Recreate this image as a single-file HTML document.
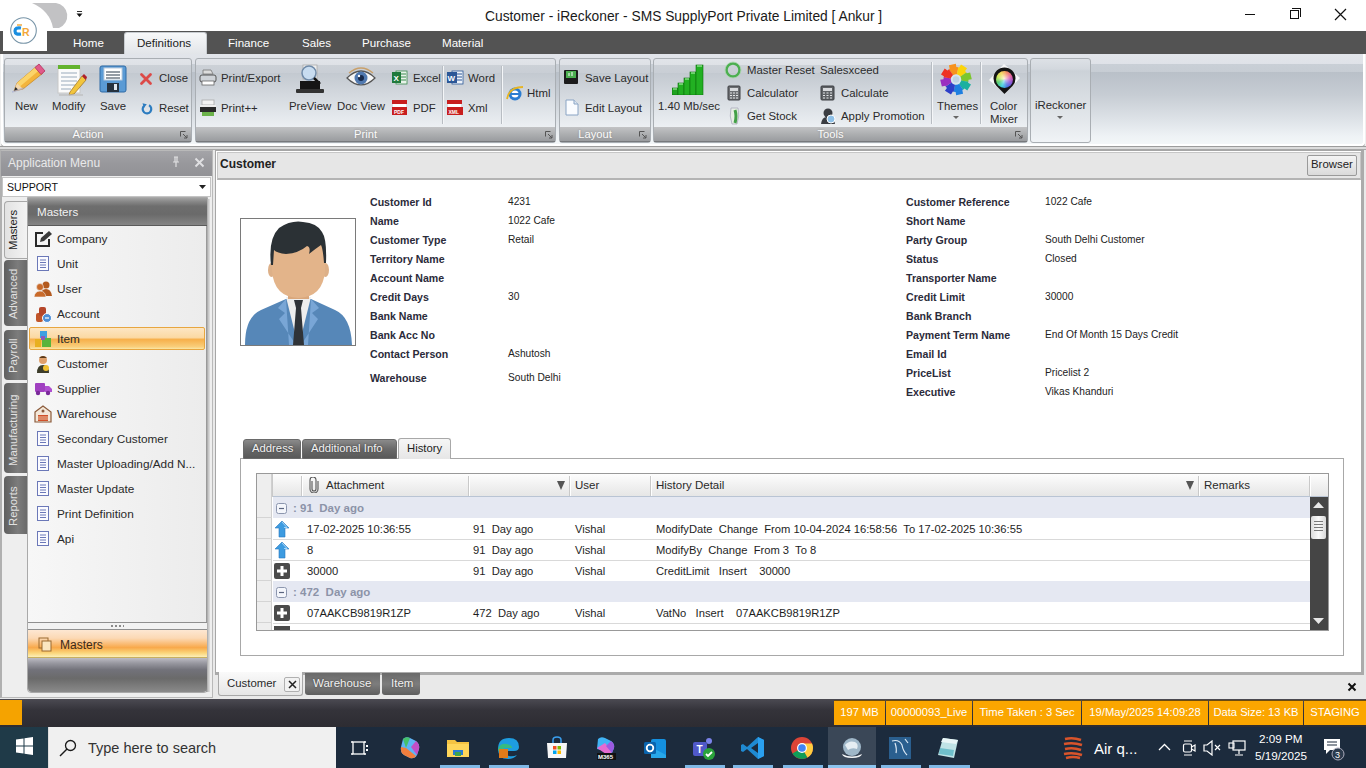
<!DOCTYPE html>
<html><head><meta charset="utf-8">
<style>
*{box-sizing:border-box;margin:0;padding:0}
html,body{width:1366px;height:768px;overflow:hidden;background:#efefef;font-family:"Liberation Sans",sans-serif;color:#222;position:relative}
.a{position:absolute}
.t{position:absolute;white-space:nowrap;line-height:1}
/* title */
#title{left:0;top:0;width:1366px;height:31px;background:#fff}
#tabs{left:0;top:31px;width:1366px;height:23px;background:#535353}
.tab{position:absolute;top:36px;color:#fff;font-size:11.6px;line-height:14px}
#ribbon{left:1px;top:54px;width:1364px;height:92px;border-radius:0 0 4px 4px;border:2px solid #fff;border-top:none;box-shadow:0 1px 0 0 #8c8c8c;background:linear-gradient(#e2e5ea 0,#dfe2e8 10px,#c9cfd6 10px,#c7cdd4 18px,#b9c0c8 18px,#c6ccd3 40px,#dde2e7 65px,#eef2f5 82px,#f3f6f8 90px)}
.grp{position:absolute;top:58px;height:85px;border:1px solid #a9aeb3;border-radius:3px;
 background:linear-gradient(#e1e4e9 0,#dee1e6 6px,#ccd1d7 6px,#c9ced5 14px,#c3c9d0 14px,#d3d8de 35px,#e6eaee 60px,#eef1f4 70px)}
.glab{position:absolute;left:0;right:0;bottom:0;height:15px;background:linear-gradient(#c2c3c5,#a9abad 60%,#9a9c9f);border-bottom:1px solid #77797c;color:#fbfbfb;font-size:11.2px;line-height:14px;text-align:center;padding-right:20px;text-shadow:0 0 2px #888}
.rl{position:absolute;font-size:11.4px;line-height:14px;color:#2b2b2b;white-space:nowrap}
</style></head><body>
<div class="a" id="title"></div>
<div class="t" style="left:485px;top:10px;font-size:13.8px;color:#1a1a1a">Customer - iReckoner - SMS SupplyPort Private Limited [ Ankur ]</div>
<!-- window controls -->
<div class="a" style="left:1245px;top:14px;width:10px;height:1px;background:#111"></div>
<div class="a" style="left:1290px;top:10px;width:9px;height:9px;border:1px solid #111;background:#fff"></div>
<div class="a" style="left:1292px;top:8px;width:9px;height:9px;border-top:1px solid #111;border-right:1px solid #111"></div>
<svg class="a" style="left:1334px;top:8px" width="13" height="13"><path d="M1 1L12 12M12 1L1 12" stroke="#111" stroke-width="1.2"/></svg>

<div class="a" id="tabs"></div>
<!-- logo -->
<div class="a" style="left:3px;top:31px;width:44px;height:20px;background:#fff"></div>
<svg class="a" style="left:28px;top:1px" width="44" height="30" viewBox="0 0 44 30"><path d="M4 2 L28 2 A13 13 0 0 1 31 27 L25 27 Q22 10 4 2Z" fill="#c2c2c4"/></svg>
<svg class="a" style="left:75px;top:9px" width="9" height="10" viewBox="0 0 9 10"><path d="M2 2.5h5" stroke="#333" stroke-width="1"/><path d="M1.5 4.5h6L4.5 8Z" fill="#111"/></svg>
<svg class="a" style="left:8px;top:16px" width="32" height="30" viewBox="0 0 32 30"><circle cx="15.5" cy="14.5" r="12.8" fill="#fff" stroke="#7895a8" stroke-width="1.1"/>
<path d="M9 9h5" stroke="#f0b050" stroke-width="1.6"/><path d="M13 12 Q7 11 7 15 Q7 19 13 18" stroke="#1a8ee0" stroke-width="3.2" fill="none"/>
<text x="14" y="19.5" font-size="10.5" font-weight="bold" fill="#f3a83a" font-family="Liberation Sans">R</text></svg>
<div class="tab" style="left:73px">Home</div>
<div class="a" style="left:124px;top:32px;width:83px;height:23px;border-radius:3px 3px 0 0;background:linear-gradient(#f7f8f9,#e1e4e8);border:1px solid #c8ccd0;border-bottom:none"></div>
<div class="tab" style="left:137px;color:#222">Definitions</div>
<div class="tab" style="left:228px">Finance</div>
<div class="tab" style="left:302px">Sales</div>
<div class="tab" style="left:362px">Purchase</div>
<div class="tab" style="left:442px">Material</div>

<div class="a" id="ribbon"></div>
<!-- groups -->
<div class="grp" style="left:4px;width:188px"><div class="glab">Action</div></div>
<div class="grp" style="left:195px;width:361px"><div class="glab">Print</div></div>
<div class="grp" style="left:559px;width:92px"><div class="glab">Layout</div></div>
<div class="grp" style="left:653px;width:375px"><div class="glab">Tools</div></div>
<div class="grp" style="left:1030px;width:61px;background:linear-gradient(#dde1e6,#d3d8de 10px,#ccd2d8 12px,#e3e7eb 60px,#f0f3f6)"></div>


<!-- ACTION -->
<svg class="a" style="left:12px;top:62px" width="34" height="32" viewBox="0 0 34 32">
 <path d="M2 29 L5 21 L25 4 L31 11 L11 27 Z" fill="#f3b43c" stroke="#c98a2a" stroke-width=".8"/>
 <path d="M5 21 L25 4 L28 7.5 L8 24.5Z" fill="#fbd46a"/>
 <path d="M2 29 L5 21 L11 27Z" fill="#f2d8b0"/><path d="M2 29 L3.5 25 L6 27.5Z" fill="#2a2a2a"/>
 <path d="M23 5.5 L27 2 L33 9 L29 12.5Z" fill="#e05a8a" stroke="#b03060" stroke-width=".8"/>
 <path d="M0 30 L12 26" stroke="#9aa0d0" stroke-width="1.5" opacity=".5"/>
</svg>
<div class="rl" style="left:15px;top:99px">New</div>
<svg class="a" style="left:55px;top:62px" width="32" height="34" viewBox="0 0 32 34">
 <rect x="3" y="5" width="22" height="26" fill="#fbfbfb" stroke="#c8c8c8"/>
 <rect x="3" y="3" width="22" height="4" fill="#63b32e"/>
 <path d="M6 11h16M6 15h16M6 19h16M6 23h14M6 27h10" stroke="#9ab" stroke-width="1"/>
 <path d="M15 30 L27 14 L31 18 L19 32 L14 33Z" fill="#f2c53d" stroke="#a5782a" stroke-width=".8"/>
 <path d="M27 14 L29 12 L32 15 L31 18Z" fill="#b0202a"/>
 <rect x="4" y="32" width="24" height="2" fill="#bbb" opacity=".6"/>
</svg>
<div class="rl" style="left:52px;top:99px">Modify</div>
<svg class="a" style="left:99px;top:65px" width="28" height="28" viewBox="0 0 28 28">
 <rect x="1" y="1" width="26" height="26" rx="2" fill="#5b9bd5" stroke="#2f6aa6"/>
 <rect x="5" y="3" width="18" height="12" fill="#fff" stroke="#bcd"/>
 <path d="M7 7h14M7 10h14M7 13h14" stroke="#2b3a4a" stroke-width="1.2"/>
 <rect x="8" y="18" width="12" height="9" fill="#26323f"/><rect x="15" y="19" width="3" height="6" fill="#dfe8f0"/>
</svg>
<div class="rl" style="left:100px;top:99px">Save</div>
<svg class="a" style="left:139px;top:72px" width="14" height="14" viewBox="0 0 14 14"><path d="M2.5 2.5L11.5 11.5M11.5 2.5L2.5 11.5" stroke="#dc4a48" stroke-width="2.8" stroke-linecap="round"/></svg>
<div class="rl" style="left:159px;top:71px">Close</div>
<svg class="a" style="left:140px;top:102px" width="13" height="13" viewBox="0 0 13 13"><path d="M4.2 3.8 A4.3 4.3 0 1 0 9 3.3" fill="none" stroke="#2c7cc0" stroke-width="2.2"/><path d="M2.5 1.2 L6.8 2.2 L4 5.8Z" fill="#2c7cc0"/></svg>
<div class="rl" style="left:159px;top:101px">Reset</div>
<svg class="a" style="left:180px;top:131px" width="8" height="8"><path d="M0.5 0.5h5M0.5 0.5v5M3 3l4 4M7 4v3h-3" stroke="#555" stroke-width="1" fill="none"/></svg>

<!-- PRINT -->
<svg class="a" style="left:199px;top:69px" width="18" height="17" viewBox="0 0 18 17">
 <path d="M4 1h8l2 4H4Z" fill="#ddd" stroke="#777" stroke-width=".8"/>
 <rect x="1" y="6" width="16" height="7" rx="2" fill="#cfd3d8" stroke="#555"/>
 <rect x="3" y="12" width="12" height="4" fill="#fff" stroke="#666" stroke-width=".8"/>
</svg>
<div class="rl" style="left:221px;top:71px">Print/Export</div>
<svg class="a" style="left:199px;top:99px" width="18" height="18" viewBox="0 0 18 18">
 <rect x="3" y="1" width="12" height="5" fill="#f4f4f4" stroke="#aaa" stroke-width=".8"/>
 <rect x="1" y="6" width="16" height="7" fill="#2a2a2a"/><rect x="1" y="6" width="16" height="2" fill="#eee"/>
 <rect x="3" y="13" width="12" height="4" fill="#6bb24a"/>
</svg>
<div class="rl" style="left:221px;top:101px">Print++</div>
<svg class="a" style="left:294px;top:64px" width="32" height="30" viewBox="0 0 32 30">
 <rect x="9" y="1" width="14" height="14" fill="#eee" stroke="#aaa" stroke-width=".8"/>
 <circle cx="15" cy="9" r="7" fill="#c8dcf0" stroke="#6f8aa8" stroke-width="1.5"/>
 <path d="M20 14 L26 20" stroke="#111" stroke-width="2.5"/>
 <rect x="6" y="17" width="20" height="8" fill="#151515"/>
 <rect x="2" y="25" width="28" height="4" rx="1" fill="#333"/>
</svg>
<div class="rl" style="left:289px;top:99px">PreView</div>
<svg class="a" style="left:345px;top:67px" width="32" height="22" viewBox="0 0 32 22">
 <path d="M2 11 Q16 -3 30 11 Q16 25 2 11Z" fill="#f6f6f6" stroke="#555" stroke-width="1.2"/>
 <circle cx="16" cy="11" r="6.5" fill="#5079b0"/><circle cx="16" cy="11" r="3" fill="#17294a"/><circle cx="14" cy="9" r="1.2" fill="#fff"/>
 <path d="M4 6 Q16 -4 28 6" stroke="#c9a06a" stroke-width="1.5" fill="none"/>
</svg>
<div class="rl" style="left:337px;top:99px">Doc View</div>
<svg class="a" style="left:391px;top:69px" width="17" height="17" viewBox="0 0 17 17">
 <rect x="5" y="2" width="11" height="13" fill="#e8f3ea" stroke="#3b8a4f" stroke-width=".8"/>
 <path d="M9 5h6M9 8h6M9 11h6" stroke="#3b8a4f" stroke-width="1"/>
 <rect x="1" y="3" width="9" height="11" fill="#1f7a3c"/><text x="2.5" y="12" font-size="8" fill="#fff" font-family="Liberation Sans" font-weight="bold">X</text>
</svg>
<div class="rl" style="left:413px;top:71px">Excel</div>
<svg class="a" style="left:391px;top:99px" width="17" height="17" viewBox="0 0 17 17">
 <rect x="1" y="1" width="15" height="4" fill="#c81e1e"/><rect x="2" y="5" width="13" height="3" fill="#fff"/>
 <rect x="1" y="8" width="15" height="8" fill="#c81e1e"/><text x="3" y="14.5" font-size="5" fill="#fff" font-family="Liberation Sans" font-weight="bold">PDF</text>
</svg>
<div class="rl" style="left:413px;top:101px">PDF</div>
<div class="a" style="left:442px;top:66px;width:1px;height:58px;background:#b8bdc3;box-shadow:1px 0 0 #f4f6f8"></div>
<svg class="a" style="left:446px;top:69px" width="18" height="17" viewBox="0 0 18 17">
 <rect x="6" y="2" width="11" height="13" fill="#eef3fa" stroke="#2b5797" stroke-width=".8"/>
 <path d="M10 5h6M10 8h6M10 11h6" stroke="#2b5797" stroke-width="1"/>
 <rect x="1" y="3" width="10" height="11" fill="#2b5797"/><text x="1.5" y="12" font-size="8" fill="#fff" font-family="Liberation Sans" font-weight="bold">W</text>
</svg>
<div class="rl" style="left:468px;top:71px">Word</div>
<svg class="a" style="left:446px;top:99px" width="18" height="17" viewBox="0 0 18 17">
 <rect x="1" y="1" width="15" height="4" fill="#c81e1e"/><rect x="2" y="5" width="13" height="3" fill="#fff"/>
 <rect x="1" y="8" width="16" height="8" fill="#c81e1e"/><text x="2.5" y="14.5" font-size="5" fill="#fff" font-family="Liberation Sans" font-weight="bold">XML</text>
</svg>
<div class="rl" style="left:468px;top:101px">Xml</div>
<div class="a" style="left:501px;top:66px;width:1px;height:58px;background:#b8bdc3;box-shadow:1px 0 0 #f4f6f8"></div>
<svg class="a" style="left:506px;top:84px" width="18" height="18" viewBox="0 0 18 18">
 <circle cx="9" cy="10" r="6.5" fill="#2a7dd1"/><circle cx="9" cy="10" r="3.5" fill="#fff"/><rect x="5" y="9" width="9" height="2" fill="#2a7dd1"/>
 <path d="M1 15 Q3 3 17 3" stroke="#e6b422" stroke-width="1.8" fill="none"/>
</svg>
<div class="rl" style="left:527px;top:86px">Html</div>
<svg class="a" style="left:545px;top:131px" width="8" height="8"><path d="M0.5 0.5h5M0.5 0.5v5M3 3l4 4M7 4v3h-3" stroke="#555" stroke-width="1" fill="none"/></svg>

<!-- LAYOUT -->
<svg class="a" style="left:563px;top:69px" width="16" height="16" viewBox="0 0 16 16">
 <rect x="1" y="1" width="14" height="14" rx="1" fill="#1c1c1c"/><rect x="3" y="2" width="10" height="7" fill="#4caf50"/><path d="M6 4v3M9 3v4" stroke="#fff" stroke-width="1"/>
</svg>
<div class="rl" style="left:585px;top:71px">Save Layout</div>
<svg class="a" style="left:565px;top:99px" width="14" height="17" viewBox="0 0 14 17">
 <path d="M1 1h8l4 4v11H1Z" fill="#fafcff" stroke="#8aa4c4" stroke-width="1"/><path d="M9 1v4h4" fill="#dde7f2" stroke="#8aa4c4" stroke-width="1"/>
</svg>
<div class="rl" style="left:585px;top:101px">Edit Layout</div>
<svg class="a" style="left:639px;top:131px" width="8" height="8"><path d="M0.5 0.5h5M0.5 0.5v5M3 3l4 4M7 4v3h-3" stroke="#555" stroke-width="1" fill="none"/></svg>

<!-- TOOLS -->
<svg class="a" style="left:672px;top:64px" width="32" height="31" viewBox="0 0 32 31">
 <rect x="0" y="24" width="6" height="7" fill="#1fa31f" stroke="#0b6e0b" stroke-width=".6"/>
 <rect x="6" y="19" width="6" height="12" fill="#22b022" stroke="#0b6e0b" stroke-width=".6"/>
 <rect x="12" y="14" width="6" height="17" fill="#22b022" stroke="#0b6e0b" stroke-width=".6"/>
 <rect x="18" y="8" width="6" height="23" fill="#22b022" stroke="#0b6e0b" stroke-width=".6"/>
 <rect x="24" y="1" width="7" height="30" fill="#22b022" stroke="#0b6e0b" stroke-width=".6"/>
 <path d="M1 25h4M7 20h4M13 15h4M19 9h4M25 2h5" stroke="#b9f5b9" stroke-width="1"/>
</svg>
<div class="rl" style="left:658px;top:99px">1.40 Mb/sec</div>
<svg class="a" style="left:724px;top:61px" width="18" height="18" viewBox="0 0 18 18"><circle cx="9" cy="9" r="6.5" fill="none" stroke="#4caf50" stroke-width="2.5"/><circle cx="9" cy="9" r="8" fill="none" stroke="#a5d6a7" stroke-width="1" opacity=".7"/></svg>
<div class="rl" style="left:747px;top:63px">Master Reset</div>
<div class="rl" style="left:820px;top:63px">Salesxceed</div>
<svg class="a" style="left:727px;top:85px" width="14" height="16" viewBox="0 0 14 16"><rect x="1" y="1" width="12" height="14" rx="1" fill="#6d6f73" stroke="#3d3f43"/><rect x="3" y="3" width="8" height="3" fill="#d8dadd"/><path d="M3 8h2M6 8h2M9 8h2M3 10.5h2M6 10.5h2M9 10.5h2M3 13h2M6 13h2M9 13h2" stroke="#e4e6e8" stroke-width="1.2"/></svg>
<div class="rl" style="left:747px;top:86px">Calculator</div>
<svg class="a" style="left:728px;top:107px" width="13" height="18" viewBox="0 0 13 18"><path d="M3 1 Q1 9 4 17 L9 17 Q12 9 10 1Z" fill="#e8efe5" stroke="#aab" stroke-width=".8"/><path d="M7 3 Q9 9 7 16" stroke="#43a047" stroke-width="3" fill="none"/></svg>
<div class="rl" style="left:747px;top:109px">Get Stock</div>
<svg class="a" style="left:820px;top:85px" width="15" height="16" viewBox="0 0 15 16"><rect x="1" y="1" width="13" height="14" rx="1" fill="#5f6266" stroke="#3d3f43"/><rect x="3" y="3" width="9" height="3" fill="#d8dadd"/><path d="M3 8h2M6.5 8h2M10 8h2M3 10.5h2M6.5 10.5h2M10 10.5h2M3 13h2M6.5 13h2M10 13h2" stroke="#e4e6e8" stroke-width="1.2"/></svg>
<div class="rl" style="left:841px;top:86px">Calculate</div>
<svg class="a" style="left:820px;top:107px" width="17" height="18" viewBox="0 0 17 18"><circle cx="8" cy="6" r="4.5" fill="#3a3d42"/><path d="M1 17 Q2 9 8 10 Q14 9 15 17Z" fill="#3a3d42"/><circle cx="11" cy="12" r="4" fill="#8fc1e8" stroke="#fff" stroke-width="1"/></svg>
<div class="rl" style="left:841px;top:109px">Apply Promotion</div>
<div class="a" style="left:931px;top:62px;width:1px;height:62px;background:#b8bdc3;box-shadow:1px 0 0 #f4f6f8"></div>
<svg class="a" style="left:939px;top:63px" width="34" height="33" viewBox="0 0 34 33"><path d="M14.17 12.38 L9.92 6.20 L10.66 5.73 L9.95 2.36 L16.86 0.70 L17.33 4.00 L19.39 4.23 L17.95 11.59 Z" fill="#f7921e"/><path d="M17.91 11.58 L19.28 4.21 L20.13 4.40 L22.01 1.52 L28.07 5.23 L26.07 7.90 L27.36 9.51 L21.15 13.70 Z" fill="#fbd40a"/><path d="M21.12 13.67 L27.30 9.42 L27.77 10.16 L31.14 9.45 L32.80 16.36 L29.50 16.83 L29.27 18.89 L21.91 17.45 Z" fill="#7cc62e"/><path d="M21.92 17.41 L29.29 18.78 L29.10 19.63 L31.98 21.51 L28.27 27.57 L25.60 25.57 L23.99 26.86 L19.80 20.65 Z" fill="#1bb0a0"/><path d="M19.83 20.62 L24.08 26.80 L23.34 27.27 L24.05 30.64 L17.14 32.30 L16.67 29.00 L14.61 28.77 L16.05 21.41 Z" fill="#1e7fe0"/><path d="M16.09 21.42 L14.72 28.79 L13.87 28.60 L11.99 31.48 L5.93 27.77 L7.93 25.10 L6.64 23.49 L12.85 19.30 Z" fill="#2d3fc8"/><path d="M12.88 19.33 L6.70 23.58 L6.23 22.84 L2.86 23.55 L1.20 16.64 L4.50 16.17 L4.73 14.11 L12.09 15.55 Z" fill="#9a2ec0"/><path d="M12.08 15.59 L4.71 14.22 L4.90 13.37 L2.02 11.49 L5.73 5.43 L8.40 7.43 L10.01 6.14 L14.20 12.35 Z" fill="#ee3224"/><circle cx="17" cy="16.5" r="5.2" fill="#d6e4ee"/><circle cx="17" cy="16.5" r="3.2" fill="#bfd3e3"/></svg>
<div class="rl" style="left:937px;top:99px">Themes</div>
<svg class="a" style="left:953px;top:116px" width="6" height="4"><path d="M0 0h6L3 3Z" fill="#666"/></svg>
<div class="a" style="left:980px;top:62px;width:1px;height:62px;background:#b8bdc3;box-shadow:1px 0 0 #f4f6f8"></div>
<svg class="a" style="left:988px;top:63px" width="34" height="33" viewBox="0 0 34 33">
 <path d="M16 1 L32 15 L17 31 L1 17Z" fill="#fff" opacity=".85"/>
 <path d="M16.5 31 L8.5 23 A11 11 0 1 1 24.5 23Z" fill="#141414"/>
</svg>
<div class="a" style="left:996px;top:71px;width:17px;height:17px;border-radius:50%;background:conic-gradient(from 200deg,#3fd0e0,#46c86a,#c8e84a,#f4d24a,#f07a50,#e0509a,#8a4ad0,#4a6ae0,#3fd0e0)"></div>
<div class="a" style="left:996px;top:71px;width:17px;height:17px;border-radius:50%;background:radial-gradient(circle at 50% 45%,rgba(255,255,255,.8),rgba(255,255,255,.2) 45%,rgba(255,255,255,0) 70%)"></div>
<div class="rl" style="left:990px;top:99px">Color</div>
<div class="rl" style="left:990px;top:112px">Mixer</div>
<svg class="a" style="left:1015px;top:131px" width="8" height="8"><path d="M0.5 0.5h5M0.5 0.5v5M3 3l4 4M7 4v3h-3" stroke="#555" stroke-width="1" fill="none"/></svg>
<div class="rl" style="left:1035px;top:98px">iReckoner</div>
<svg class="a" style="left:1057px;top:116px" width="6" height="4"><path d="M0 0h6L3 3Z" fill="#666"/></svg>



<!-- ===== LEFT PANEL ===== -->
<div class="a" style="left:0;top:146px;width:1366px;height:553px;background:#e9e9e9"></div>
<div class="a" style="left:0;top:146px;width:1366px;height:1px;background:#9c9c9c"></div><div class="a" style="left:0;top:147px;width:1366px;height:2px;background:#dcdcdc"></div><div class="a" style="left:0;top:149px;width:1366px;height:1px;background:#a8a8a8"></div>
<div class="a" style="left:0;top:150px;width:213px;height:548px;border:1px solid #b9b9b9;border-left:2px solid #b0b0b0;background:#eeeeee"></div>
<div class="a" style="left:1px;top:151px;width:211px;height:25px;background:linear-gradient(#a4a4a8,#98989c 50%,#929296)"></div>
<div class="t" style="left:8px;top:157px;font-size:12px;color:#e9e9ea">Application Menu</div>
<svg class="a" style="left:171px;top:156px" width="10" height="12" viewBox="0 0 10 12"><path d="M3 1h4M4 1v5M6 1v5M2 6h6M5 6v5" stroke="#e0e0e2" stroke-width="1.2" fill="none"/></svg>
<svg class="a" style="left:194px;top:157px" width="11" height="11" viewBox="0 0 11 11"><path d="M1.5 1.5L9.5 9.5M9.5 1.5L1.5 9.5" stroke="#e0e0e2" stroke-width="2"/></svg>
<div class="a" style="left:2px;top:177px;width:209px;height:20px;background:#fff;border:1px solid #c4c4c4"></div>
<div class="t" style="left:7px;top:182px;font-size:10.6px;color:#111">SUPPORT</div>
<svg class="a" style="left:199px;top:185px" width="7" height="4"><path d="M0 0h7L3.5 4Z" fill="#222"/></svg>

<!-- vertical tabs -->
<div class="a" style="left:4px;top:201px;width:24px;height:58px;border:1px solid #a8a8a8;border-right:none;border-radius:4px 0 0 4px;background:linear-gradient(90deg,#e2e2e2,#f4f4f4)"></div>
<div class="t" style="left:8px;top:250px;font-size:11.3px;color:#222;transform:rotate(-90deg);transform-origin:0 0">Masters</div>
<div class="a" style="left:4px;top:260px;width:23px;height:66px;border-radius:4px 0 0 4px;background:linear-gradient(90deg,#5f5f5f,#7c7c7c 60%,#6a6a6a)"></div>
<div class="t" style="left:8px;top:319px;font-size:11.3px;color:#e2e2e2;transform:rotate(-90deg);transform-origin:0 0">Advanced</div>
<div class="a" style="left:4px;top:330px;width:23px;height:50px;border-radius:4px 0 0 4px;background:linear-gradient(90deg,#5f5f5f,#7c7c7c 60%,#6a6a6a)"></div>
<div class="t" style="left:8px;top:373px;font-size:11.3px;color:#e2e2e2;transform:rotate(-90deg);transform-origin:0 0">Payroll</div>
<div class="a" style="left:4px;top:383px;width:23px;height:90px;border-radius:4px 0 0 4px;background:linear-gradient(90deg,#5f5f5f,#7c7c7c 60%,#6a6a6a)"></div>
<div class="t" style="left:8px;top:466px;font-size:11.3px;color:#e2e2e2;transform:rotate(-90deg);transform-origin:0 0">Manufacturing</div>
<div class="a" style="left:4px;top:476px;width:23px;height:58px;border-radius:4px 0 0 4px;background:linear-gradient(90deg,#5f5f5f,#7c7c7c 60%,#6a6a6a)"></div>
<div class="t" style="left:8px;top:526px;font-size:11.3px;color:#e2e2e2;transform:rotate(-90deg);transform-origin:0 0">Reports</div>

<!-- menu -->
<div class="a" style="left:27px;top:197px;width:181px;height:496px;border:1px solid #a9a9a9;border-radius:0 0 4px 4px;background:linear-gradient(90deg,#f7f7f7,#ececec)"></div><div class="a" style="left:206px;top:199px;width:4px;height:493px;background:linear-gradient(90deg,#8e8e8e,#cfcfcf 70%,#dedede)"></div>
<div class="a" style="left:28px;top:198px;width:179px;height:28px;background:linear-gradient(#a2a2a2 0,#8a8a8a 12%,#6e6e6e 30%,#6a6a6a 60%,#858585 100%);border-bottom:1px solid #5a5a5a"></div>
<div class="t" style="left:37px;top:206px;font-size:11.6px;color:#f2f2f2">Masters</div>
<div class="a" style="left:29px;top:327px;width:176px;height:23px;border:1px solid #e7a640;border-radius:2px;background:linear-gradient(#fde6c3,#fbd9a3 45%,#f7b04b 55%,#f9cf7c 90%,#fbe7a7)"></div>
<svg class="a" style="left:34px;top:230px" width="18" height="18" viewBox="0 0 18 18"><path d="M9 3H2v13h13V9" fill="none" stroke="#2a2a2a" stroke-width="2"/><path d="M6 12l1-4 8-7 3 3-8 7z" fill="#3a3a3a"/></svg>
<div class="t" style="left:57px;top:234px;font-size:11.8px;color:#2a2a2a">Company</div>
<svg class="a" style="left:36px;top:255px" width="14" height="17" viewBox="0 0 14 17"><rect x="1.5" y="1.5" width="11" height="14" fill="#fbfbff" stroke="#6b78b8" stroke-width="1"/><path d="M4 5h6M4 7.5h6M4 10h6M4 12.5h6" stroke="#6b78b8" stroke-width="1"/></svg>
<div class="t" style="left:57px;top:259px;font-size:11.8px;color:#2a2a2a">Unit</div>
<svg class="a" style="left:34px;top:280px" width="18" height="17" viewBox="0 0 18 17"><circle cx="12" cy="5" r="3.5" fill="#b35a1f"/><path d="M6 16 Q7 9 12 9 Q17 9 18 16Z" fill="#b35a1f"/><circle cx="6" cy="7" r="3.5" fill="#c96a2a" stroke="#eee" stroke-width=".6"/><path d="M0 17 Q1 11 6 11 Q11 11 12 17Z" fill="#c96a2a" stroke="#eee" stroke-width=".6"/></svg>
<div class="t" style="left:57px;top:284px;font-size:11.8px;color:#2a2a2a">User</div>
<svg class="a" style="left:34px;top:305px" width="18" height="18" viewBox="0 0 18 18"><rect x="2" y="8" width="7" height="9" rx="2" fill="#c2562a"/><rect x="5" y="2" width="7" height="9" rx="2" fill="#b5462a"/><circle cx="13" cy="13" r="4.5" fill="#4f8fd6" stroke="#fff" stroke-width="1"/><path d="M11 13h4" stroke="#fff" stroke-width="1.2"/></svg>
<div class="t" style="left:57px;top:309px;font-size:11.8px;color:#2a2a2a">Account</div>
<svg class="a" style="left:34px;top:330px" width="18" height="18" viewBox="0 0 18 18"><rect x="6" y="1" width="7" height="7" fill="#3fa0e0"/><rect x="1" y="9" width="6" height="8" fill="#e8b020"/><rect x="8" y="8" width="9" height="9" fill="#5ab43c"/><rect x="7" y="6" width="4" height="4" fill="#8c5ab8"/></svg>
<div class="t" style="left:57px;top:334px;font-size:11.8px;color:#2a2a2a">Item</div>
<svg class="a" style="left:35px;top:355px" width="16" height="18" viewBox="0 0 16 18"><circle cx="8" cy="5" r="4" fill="#e0a06a"/><path d="M4 3 Q8 -1 12 3" fill="#5a3a1a"/><path d="M2 18 Q2 10 8 10 Q14 10 14 18Z" fill="#3d3d2a"/><circle cx="11" cy="13" r="3" fill="#f0c030"/></svg>
<div class="t" style="left:57px;top:359px;font-size:11.8px;color:#2a2a2a">Customer</div>
<svg class="a" style="left:34px;top:380px" width="18" height="16" viewBox="0 0 18 16"><rect x="1" y="3" width="10" height="9" rx="1" fill="#a040c0"/><path d="M11 6h4l3 3v3h-7z" fill="#b050d0"/><circle cx="4" cy="13" r="2.2" fill="#7a2a9a"/><circle cx="14" cy="13" r="2.2" fill="#7a2a9a"/></svg>
<div class="t" style="left:57px;top:384px;font-size:11.8px;color:#2a2a2a">Supplier</div>
<svg class="a" style="left:34px;top:405px" width="18" height="18" viewBox="0 0 18 18"><path d="M1 7L9 1l8 6v10H1z" fill="#f3e7d8" stroke="#8a5a3a" stroke-width="1.2"/><rect x="4" y="10" width="10" height="6" fill="#d0502a"/><path d="M4 12h10M4 14h10" stroke="#f3e0c0" stroke-width=".8"/><circle cx="9" cy="6" r="1.5" fill="#8a5a3a"/></svg>
<div class="t" style="left:57px;top:409px;font-size:11.8px;color:#2a2a2a">Warehouse</div>
<svg class="a" style="left:36px;top:430px" width="14" height="17" viewBox="0 0 14 17"><rect x="1.5" y="1.5" width="11" height="14" fill="#fbfbff" stroke="#6b78b8" stroke-width="1"/><path d="M4 5h6M4 7.5h6M4 10h6M4 12.5h6" stroke="#6b78b8" stroke-width="1"/></svg>
<div class="t" style="left:57px;top:434px;font-size:11.8px;color:#2a2a2a">Secondary Customer</div>
<svg class="a" style="left:36px;top:455px" width="14" height="17" viewBox="0 0 14 17"><rect x="1.5" y="1.5" width="11" height="14" fill="#fbfbff" stroke="#6b78b8" stroke-width="1"/><path d="M4 5h6M4 7.5h6M4 10h6M4 12.5h6" stroke="#6b78b8" stroke-width="1"/></svg>
<div class="t" style="left:57px;top:459px;font-size:11.8px;color:#2a2a2a">Master Uploading/Add N...</div>
<svg class="a" style="left:36px;top:480px" width="14" height="17" viewBox="0 0 14 17"><rect x="1.5" y="1.5" width="11" height="14" fill="#fbfbff" stroke="#6b78b8" stroke-width="1"/><path d="M4 5h6M4 7.5h6M4 10h6M4 12.5h6" stroke="#6b78b8" stroke-width="1"/></svg>
<div class="t" style="left:57px;top:484px;font-size:11.8px;color:#2a2a2a">Master Update</div>
<svg class="a" style="left:36px;top:505px" width="14" height="17" viewBox="0 0 14 17"><rect x="1.5" y="1.5" width="11" height="14" fill="#fbfbff" stroke="#6b78b8" stroke-width="1"/><path d="M4 5h6M4 7.5h6M4 10h6M4 12.5h6" stroke="#6b78b8" stroke-width="1"/></svg>
<div class="t" style="left:57px;top:509px;font-size:11.8px;color:#2a2a2a">Print Definition</div>
<svg class="a" style="left:36px;top:530px" width="14" height="17" viewBox="0 0 14 17"><rect x="1.5" y="1.5" width="11" height="14" fill="#fbfbff" stroke="#6b78b8" stroke-width="1"/><path d="M4 5h6M4 7.5h6M4 10h6M4 12.5h6" stroke="#6b78b8" stroke-width="1"/></svg>
<div class="t" style="left:57px;top:534px;font-size:11.8px;color:#2a2a2a">Api</div>
<div class="a" style="left:28px;top:622px;width:179px;height:8px;border-top:1px solid #8f8f8f;border-bottom:1px solid #8f8f8f;background:#f2f2f2"></div>
<div class="a" style="left:111px;top:625px;width:13px;height:2px;background:repeating-linear-gradient(90deg,#8a8a8a 0 2px,transparent 2px 4px)"></div>
<div class="a" style="left:28px;top:630px;width:179px;height:28px;border-bottom:1px solid #c8b060;background:linear-gradient(#fde7d2 0,#fcd9b5 30%,#f8a94b 65%,#fbd57a 85%,#fdf0b8 100%)"></div>
<svg class="a" style="left:38px;top:637px" width="14" height="15" viewBox="0 0 14 15"><rect x="1" y="1" width="9" height="10" fill="none" stroke="#9a6a30"/><rect x="4" y="4" width="9" height="10" fill="#fbe6c0" stroke="#9a6a30"/></svg>
<div class="t" style="left:60px;top:639px;font-size:12px;color:#3a2a1a">Masters</div>
<div class="a" style="left:28px;top:658px;width:179px;height:34px;border-radius:0 0 4px 4px;background:linear-gradient(#bdbcc4 0,#9898a0 15%,#72727a 35%,#6a6a6a 60%,#8a8a8a 100%)"></div>

<!-- ===== CUSTOMER PANEL ===== -->
<div class="a" style="left:215px;top:150px;width:1149px;height:525px;border:1px solid #a6a6a6;border-right:3px solid #ababab;border-bottom:3px solid #ababab;background:#fff"></div>
<div class="a" style="left:217px;top:152px;width:1144px;height:28px;border:1px solid #c6c6c6;border-bottom:2px solid #b4b4b4;background:#e6e6e6"></div>
<div class="t" style="left:220px;top:158px;font-size:12px;font-weight:bold;color:#222">Customer</div>
<div class="a" style="left:1307px;top:155px;width:50px;height:21px;border:1px solid #9a9a9a;border-radius:2px;background:linear-gradient(#f4f4f4,#dadada)"></div>
<div class="t" style="left:1311px;top:159px;font-size:11.4px;color:#222">Browser</div>

<!-- photo -->
<div class="a" style="left:240px;top:218px;width:116px;height:128px;border:1px solid #7a7a7a;background:#fff;overflow:hidden">
<svg width="114" height="126" viewBox="0 0 114 126">
 <path d="M4 126 Q4 98 20 91 L45 80 L70 80 L94 91 Q110 98 111 126Z" fill="#5687b8"/>
 <path d="M45 80 L37 89 L44 94 L38 100 L55 126 L48 126 Z" fill="#79a6d6"/>
 <path d="M70 80 L78 89 L71 94 L77 100 L60 126 L67 126 Z" fill="#79a6d6"/>
 <path d="M45 78 L70 78 L58 126 L57 126Z" fill="#eeeeee"/>
 <path d="M53 81 L62 81 L60 89 L63 126 L52 126 L55 89Z" fill="#2f3338"/>
 <rect x="47" y="64" width="21" height="16" fill="#d9a77c"/>
 <ellipse cx="30.5" cy="51" rx="3.5" ry="7" fill="#ddb088"/><ellipse cx="84.5" cy="51" rx="3.5" ry="7" fill="#ddb088"/>
 <path d="M31 26 L31 52 Q33 78 57.5 79 Q82 78 84 52 L84 26 Z" fill="#e3b48a"/>
 <path d="M30 46 Q27 20 38 9 Q50 1 62 3 Q76 4 81 13 Q86 20 85 44 L83 44 Q82 30 80 26 Q74 30 68 35 Q70 28 66 27 Q58 34 45 35 Q36 34 33 31 L32 46 Z" fill="#2b3135"/>
</svg></div>
<div class="t" style="left:370px;top:197px;font-size:10.6px;font-weight:bold;color:#2b2b3a">Customer Id</div>
<div class="t" style="left:508px;top:197px;font-size:10.2px;color:#222">4231</div>
<div class="t" style="left:370px;top:216px;font-size:10.6px;font-weight:bold;color:#2b2b3a">Name</div>
<div class="t" style="left:508px;top:216px;font-size:10.2px;color:#222">1022 Cafe</div>
<div class="t" style="left:370px;top:235px;font-size:10.6px;font-weight:bold;color:#2b2b3a">Customer Type</div>
<div class="t" style="left:508px;top:235px;font-size:10.2px;color:#222">Retail</div>
<div class="t" style="left:370px;top:254px;font-size:10.6px;font-weight:bold;color:#2b2b3a">Territory Name</div>
<div class="t" style="left:370px;top:273px;font-size:10.6px;font-weight:bold;color:#2b2b3a">Account Name</div>
<div class="t" style="left:370px;top:292px;font-size:10.6px;font-weight:bold;color:#2b2b3a">Credit Days</div>
<div class="t" style="left:508px;top:292px;font-size:10.2px;color:#222">30</div>
<div class="t" style="left:370px;top:311px;font-size:10.6px;font-weight:bold;color:#2b2b3a">Bank Name</div>
<div class="t" style="left:370px;top:330px;font-size:10.6px;font-weight:bold;color:#2b2b3a">Bank Acc No</div>
<div class="t" style="left:370px;top:349px;font-size:10.6px;font-weight:bold;color:#2b2b3a">Contact Person</div>
<div class="t" style="left:508px;top:349px;font-size:10.2px;color:#222">Ashutosh</div>
<div class="t" style="left:370px;top:373px;font-size:10.6px;font-weight:bold;color:#2b2b3a">Warehouse</div>
<div class="t" style="left:508px;top:373px;font-size:10.2px;color:#222">South Delhi</div>
<div class="t" style="left:906px;top:197px;font-size:10.6px;font-weight:bold;color:#2b2b3a">Customer Reference</div>
<div class="t" style="left:1045px;top:197px;font-size:10.2px;color:#222">1022 Cafe</div>
<div class="t" style="left:906px;top:216px;font-size:10.6px;font-weight:bold;color:#2b2b3a">Short Name</div>
<div class="t" style="left:906px;top:235px;font-size:10.6px;font-weight:bold;color:#2b2b3a">Party Group</div>
<div class="t" style="left:1045px;top:235px;font-size:10.2px;color:#222">South Delhi Customer</div>
<div class="t" style="left:906px;top:254px;font-size:10.6px;font-weight:bold;color:#2b2b3a">Status</div>
<div class="t" style="left:1045px;top:254px;font-size:10.2px;color:#222">Closed</div>
<div class="t" style="left:906px;top:273px;font-size:10.6px;font-weight:bold;color:#2b2b3a">Transporter Name</div>
<div class="t" style="left:906px;top:292px;font-size:10.6px;font-weight:bold;color:#2b2b3a">Credit Limit</div>
<div class="t" style="left:1045px;top:292px;font-size:10.2px;color:#222">30000</div>
<div class="t" style="left:906px;top:311px;font-size:10.6px;font-weight:bold;color:#2b2b3a">Bank Branch</div>
<div class="t" style="left:906px;top:330px;font-size:10.6px;font-weight:bold;color:#2b2b3a">Payment Term Name</div>
<div class="t" style="left:1045px;top:330px;font-size:10.2px;color:#222">End Of Month 15 Days Credit</div>
<div class="t" style="left:906px;top:349px;font-size:10.6px;font-weight:bold;color:#2b2b3a">Email Id</div>
<div class="t" style="left:906px;top:368px;font-size:10.6px;font-weight:bold;color:#2b2b3a">PriceList</div>
<div class="t" style="left:1045px;top:368px;font-size:10.2px;color:#222">Pricelist 2</div>
<div class="t" style="left:906px;top:387px;font-size:10.6px;font-weight:bold;color:#2b2b3a">Executive</div>
<div class="t" style="left:1045px;top:387px;font-size:10.2px;color:#222">Vikas Khanduri</div>

<!-- tabs -->
<div class="a" style="left:240px;top:458px;width:1104px;height:198px;border:1px solid #a8a8a8;background:#fff"></div>
<div class="a" style="left:243px;top:439px;width:58px;height:20px;border-radius:3px 3px 0 0;background:linear-gradient(#8a8a8a,#6a6a6a 50%,#595959);border:1px solid #6a6a6a"></div>
<div class="t" style="left:252px;top:443px;font-size:11.3px;color:#f2f2f2;text-shadow:0 0 2px #333">Address</div>
<div class="a" style="left:302px;top:439px;width:95px;height:20px;border-radius:3px 3px 0 0;background:linear-gradient(#8a8a8a,#6a6a6a 50%,#595959);border:1px solid #6a6a6a"></div>
<div class="t" style="left:311px;top:443px;font-size:11.3px;color:#f2f2f2;text-shadow:0 0 2px #333">Additional Info</div>
<div class="a" style="left:398px;top:438px;width:53px;height:21px;border-radius:3px 3px 0 0;background:linear-gradient(#f6f6f6,#e6e6e6);border:1px solid #a8a8a8;border-bottom:none"></div>
<div class="t" style="left:407px;top:443px;font-size:11.3px;color:#222">History</div>

<!-- grid -->
<div class="a" style="left:256px;top:473px;width:1073px;height:158px;border:1px solid #999;background:#fff;overflow:hidden"></div>
<div class="a" style="left:257px;top:474px;width:1071px;height:23px;background:linear-gradient(#fdfdfd,#f1f1f1 50%,#e6e6e6);border-bottom:1px solid #b9c4d4"></div>
<div class="a" style="left:257px;top:474px;width:15px;height:156px;background:#eeeeee;border-right:1px solid #cfcfcf"></div>
<div class="a" style="left:301px;top:476px;width:1px;height:20px;background:#c9c9c9;box-shadow:1px 0 0 #fff"></div>
<div class="a" style="left:468px;top:476px;width:1px;height:20px;background:#c9c9c9;box-shadow:1px 0 0 #fff"></div>
<div class="a" style="left:569px;top:476px;width:1px;height:20px;background:#c9c9c9;box-shadow:1px 0 0 #fff"></div>
<div class="a" style="left:650px;top:476px;width:1px;height:20px;background:#c9c9c9;box-shadow:1px 0 0 #fff"></div>
<div class="a" style="left:1198px;top:476px;width:1px;height:20px;background:#c9c9c9;box-shadow:1px 0 0 #fff"></div>
<div class="a" style="left:1309px;top:476px;width:1px;height:20px;background:#c9c9c9;box-shadow:1px 0 0 #fff"></div>
<div class="a" style="left:272px;top:474px;width:1px;height:23px;background:#c9c9c9"></div>
<svg class="a" style="left:309px;top:477px" width="10" height="16" viewBox="0 0 10 16"><path d="M3 4v8a2 2 0 0 0 4 0V3a3 3 0 0 0-6 0v9a4 4 0 0 0 8 0V4" fill="none" stroke="#555" stroke-width="1.1"/></svg>
<div class="t" style="left:326px;top:480px;font-size:11.5px;color:#2a2a2a">Attachment</div>
<svg class="a" style="left:557px;top:481px" width="8" height="9"><path d="M0 0h8L4 9Z" fill="#555"/></svg>
<div class="t" style="left:575px;top:480px;font-size:11.5px;color:#2a2a2a">User</div>
<div class="t" style="left:656px;top:480px;font-size:11.5px;color:#2a2a2a">History Detail</div>
<svg class="a" style="left:1186px;top:481px" width="8" height="9"><path d="M0 0h8L4 9Z" fill="#555"/></svg>
<div class="t" style="left:1204px;top:480px;font-size:11.5px;color:#2a2a2a">Remarks</div>
<div class="a" style="left:273px;top:497px;width:1037px;height:21px;background:#e5e8f2"></div>
<svg class="a" style="left:276px;top:503px" width="11" height="11" viewBox="0 0 11 11"><rect x=".5" y=".5" width="10" height="10" rx="2" fill="#f4f6fb" stroke="#8c96ae"/><path d="M3 5.5h5" stroke="#5a6580" stroke-width="1.2"/></svg>
<div class="t" style="left:293px;top:503px;font-size:11.5px;font-weight:bold;color:#8c93a8;white-space:pre">: 91  Day ago</div>
<div class="a" style="left:257px;top:517px;width:15px;height:1px;background:#d4d4d4"></div>
<svg class="a" style="left:274px;top:520px" width="16" height="18" viewBox="0 0 16 18"><path d="M8 1L15 8H11V17H5V8H1Z" fill="#3d9be0" stroke="#2a7bc0" stroke-width=".6"/><path d="M8 2L13 7.5H10" fill="none" stroke="#9fd3fa" stroke-width="1"/></svg>
<div class="t" style="left:307px;top:524px;font-size:11.2px;color:#1e1e1e;white-space:pre">17-02-2025 10:36:55</div>
<div class="t" style="left:473px;top:524px;font-size:11.2px;color:#1e1e1e;white-space:pre">91  Day ago</div>
<div class="t" style="left:575px;top:524px;font-size:11.2px;color:#1e1e1e;white-space:pre">Vishal</div>
<div class="t" style="left:656px;top:524px;font-size:11.2px;color:#1e1e1e;white-space:pre">ModifyDate  Change  From 10-04-2024 16:58:56  To 17-02-2025 10:36:55</div>
<div class="a" style="left:273px;top:539px;width:1037px;height:1px;background:#d9d9d9"></div>
<div class="a" style="left:257px;top:538px;width:15px;height:1px;background:#d4d4d4"></div>
<svg class="a" style="left:274px;top:541px" width="16" height="18" viewBox="0 0 16 18"><path d="M8 1L15 8H11V17H5V8H1Z" fill="#3d9be0" stroke="#2a7bc0" stroke-width=".6"/><path d="M8 2L13 7.5H10" fill="none" stroke="#9fd3fa" stroke-width="1"/></svg>
<div class="t" style="left:307px;top:545px;font-size:11.2px;color:#1e1e1e;white-space:pre">8</div>
<div class="t" style="left:473px;top:545px;font-size:11.2px;color:#1e1e1e;white-space:pre">91  Day ago</div>
<div class="t" style="left:575px;top:545px;font-size:11.2px;color:#1e1e1e;white-space:pre">Vishal</div>
<div class="t" style="left:656px;top:545px;font-size:11.2px;color:#1e1e1e;white-space:pre">ModifyBy  Change  From 3  To 8</div>
<div class="a" style="left:273px;top:560px;width:1037px;height:1px;background:#d9d9d9"></div>
<div class="a" style="left:257px;top:559px;width:15px;height:1px;background:#d4d4d4"></div>
<svg class="a" style="left:274px;top:563px" width="16" height="16" viewBox="0 0 16 16"><rect x="0" y="0" width="16" height="16" rx="2" fill="#4a4a4a"/><path d="M8 3v10M3 8h10" stroke="#fff" stroke-width="3"/></svg>
<div class="t" style="left:307px;top:566px;font-size:11.2px;color:#1e1e1e;white-space:pre">30000</div>
<div class="t" style="left:473px;top:566px;font-size:11.2px;color:#1e1e1e;white-space:pre">91  Day ago</div>
<div class="t" style="left:575px;top:566px;font-size:11.2px;color:#1e1e1e;white-space:pre">Vishal</div>
<div class="t" style="left:656px;top:566px;font-size:11.2px;color:#1e1e1e;white-space:pre">CreditLimit   Insert    30000</div>
<div class="a" style="left:273px;top:581px;width:1037px;height:1px;background:#d9d9d9"></div>
<div class="a" style="left:257px;top:580px;width:15px;height:1px;background:#d4d4d4"></div>
<div class="a" style="left:273px;top:581px;width:1037px;height:21px;background:#e5e8f2"></div>
<svg class="a" style="left:276px;top:587px" width="11" height="11" viewBox="0 0 11 11"><rect x=".5" y=".5" width="10" height="10" rx="2" fill="#f4f6fb" stroke="#8c96ae"/><path d="M3 5.5h5" stroke="#5a6580" stroke-width="1.2"/></svg>
<div class="t" style="left:293px;top:587px;font-size:11.5px;font-weight:bold;color:#8c93a8;white-space:pre">: 472  Day ago</div>
<div class="a" style="left:257px;top:601px;width:15px;height:1px;background:#d4d4d4"></div>
<svg class="a" style="left:274px;top:605px" width="16" height="16" viewBox="0 0 16 16"><rect x="0" y="0" width="16" height="16" rx="2" fill="#4a4a4a"/><path d="M8 3v10M3 8h10" stroke="#fff" stroke-width="3"/></svg>
<div class="t" style="left:307px;top:608px;font-size:11.2px;color:#1e1e1e;white-space:pre">07AAKCB9819R1ZP</div>
<div class="t" style="left:473px;top:608px;font-size:11.2px;color:#1e1e1e;white-space:pre">472  Day ago</div>
<div class="t" style="left:575px;top:608px;font-size:11.2px;color:#1e1e1e;white-space:pre">Vishal</div>
<div class="t" style="left:656px;top:608px;font-size:11.2px;color:#1e1e1e;white-space:pre">VatNo   Insert    07AAKCB9819R1ZP</div>
<div class="a" style="left:273px;top:623px;width:1037px;height:1px;background:#d9d9d9"></div>
<div class="a" style="left:257px;top:622px;width:15px;height:1px;background:#d4d4d4"></div>
<div class="a" style="left:274px;top:626px;width:16px;height:4px;background:#4a4a4a"></div>


<div class="a" style="left:1310px;top:497px;width:18px;height:133px;background:#454545"></div>
<svg class="a" style="left:1313px;top:501px" width="11" height="8"><path d="M0 7L5.5 1L11 7Z" fill="#e8e8e8"/></svg>
<svg class="a" style="left:1313px;top:617px" width="11" height="8"><path d="M0 1L5.5 7L11 1Z" fill="#e8e8e8"/></svg>
<div class="a" style="left:1311px;top:516px;width:15px;height:23px;border-radius:2px;background:linear-gradient(90deg,#dcdcdc,#fafafa 50%,#d8d8d8)"></div>
<div class="a" style="left:1314px;top:521px;width:9px;height:12px;background:repeating-linear-gradient(#7a7a7a 0 1px,transparent 1px 3px)"></div>

<!-- doc tabs -->
<div class="a" style="left:218px;top:672px;width:85px;height:24px;border:1px solid #a8a8a8;border-top:none;border-radius:0 0 3px 3px;background:linear-gradient(#fafafa,#e6e6e6)"></div>
<div class="t" style="left:227px;top:678px;font-size:11.4px;color:#2a2a2a">Customer</div>
<div class="a" style="left:284px;top:677px;width:16px;height:15px;border:1px solid #b0b0b0;border-radius:2px;background:#f2f2f2"></div>
<svg class="a" style="left:288px;top:680px" width="9" height="9"><path d="M1 1L8 8M8 1L1 8" stroke="#222" stroke-width="1.5"/></svg>
<div class="a" style="left:305px;top:673px;width:75px;height:22px;border-radius:0 0 3px 3px;background:linear-gradient(#6a6a6a,#7d7d7d 50%,#5e5e5e)"></div>
<div class="t" style="left:313px;top:678px;font-size:11.5px;color:#f2f2f2;text-shadow:0 0 2px #333">Warehouse</div>
<div class="a" style="left:382px;top:673px;width:38px;height:22px;border-radius:0 0 3px 3px;background:linear-gradient(#6a6a6a,#7d7d7d 50%,#5e5e5e)"></div>
<div class="t" style="left:391px;top:678px;font-size:11.5px;color:#f2f2f2;text-shadow:0 0 2px #333">Item</div>
<svg class="a" style="left:1347px;top:682px" width="10" height="10"><path d="M1.5 1.5L8.5 8.5M8.5 1.5L1.5 8.5" stroke="#111" stroke-width="2"/></svg>

<!-- ===== STATUS BAR ===== -->
<div class="a" style="left:0;top:699px;width:1366px;height:28px;background:linear-gradient(#4b4a52,#34333a 40%,#2d2c32)"></div>
<div class="a" style="left:0;top:700px;width:22px;height:25px;background:#f5a300"></div>
<div class="a" style="left:834px;top:700px;width:51px;height:25px;background:#fba600;border-top:1px solid #6a4a10"></div>
<div class="t" style="left:834px;top:707px;width:51px;text-align:center;font-size:11.2px;color:#fff">197 MB</div>
<div class="a" style="left:886px;top:700px;width:86px;height:25px;background:#fba600;border-top:1px solid #6a4a10"></div>
<div class="t" style="left:886px;top:707px;width:86px;text-align:center;font-size:11.2px;color:#fff">00000093_Live</div>
<div class="a" style="left:973px;top:700px;width:108px;height:25px;background:#fba600;border-top:1px solid #6a4a10"></div>
<div class="t" style="left:973px;top:707px;width:108px;text-align:center;font-size:11.2px;color:#fff">Time Taken : 3 Sec</div>
<div class="a" style="left:1082px;top:700px;width:126px;height:25px;background:#fba600;border-top:1px solid #6a4a10"></div>
<div class="t" style="left:1082px;top:707px;width:126px;text-align:center;font-size:11.2px;color:#fff">19/May/2025 14:09:28</div>
<div class="a" style="left:1209px;top:700px;width:94px;height:25px;background:#fba600;border-top:1px solid #6a4a10"></div>
<div class="t" style="left:1209px;top:707px;width:94px;text-align:center;font-size:11.2px;color:#fff">Data Size: 13 KB</div>
<div class="a" style="left:1304px;top:700px;width:62px;height:25px;background:#fba600;border-top:1px solid #6a4a10"></div>
<div class="t" style="left:1304px;top:707px;width:62px;text-align:center;font-size:11.2px;color:#fff">STAGING</div>

<!-- ===== TASKBAR ===== -->
<div class="a" style="left:0;top:727px;width:1366px;height:41px;background:#1c2b3d"></div>
<div class="a" style="left:0;top:727px;width:48px;height:41px;background:#1f3a48"></div>
<svg class="a" style="left:16px;top:737px" width="17" height="18" viewBox="0 0 17 18"><path d="M0 2.5L7.5 1.4V8.5H0Z M8.5 1.3L17 0V8.5H8.5Z M0 9.5H7.5V16.6L0 15.5Z M8.5 9.5H17V18L8.5 16.7Z" fill="#fff"/></svg>
<div class="a" style="left:48px;top:727px;width:288px;height:41px;background:#f0f0f0;border-left:1px solid #ddd"></div>
<svg class="a" style="left:59px;top:739px" width="18" height="18" viewBox="0 0 18 18"><circle cx="11.5" cy="6.5" r="5" fill="none" stroke="#1a1a1a" stroke-width="1.3"/><path d="M8 10L1 17" stroke="#1a1a1a" stroke-width="1.4"/></svg>
<div class="t" style="left:88px;top:741px;font-size:14.5px;color:#333">Type here to search</div>
<svg class="a" style="left:351px;top:739px" width="18" height="18" viewBox="0 0 18 18"><rect x="2" y="3" width="11" height="12" fill="none" stroke="#fff" stroke-width="1.3"/><path d="M0 3h2M0 15h2M13 3h2M13 15h2" stroke="#fff" stroke-width="1.3"/><rect x="15" y="6" width="2" height="2" fill="#fff"/><rect x="15" y="10" width="2" height="2" fill="#fff"/></svg>
<svg class="a" style="left:397px;top:735px" width="26" height="26" viewBox="0 0 26 26"><path d="M6 4Q9 1 13 3L19 6Q23 9 22 14L20 20Q18 24 13 23L7 20Q3 17 4 12Z" fill="#5fb4f5"/><path d="M4 12Q3 17 7 20L13 23Q17 24 19 21L9 13Z" fill="#f27e3d"/><path d="M19 6Q23 9 22 14L20 20L14 12Z" fill="#c24fc6"/><path d="M6 4Q9 1 13 3L9 13Z" fill="#45c16b"/></svg>
<svg class="a" style="left:445px;top:735px" width="26" height="26" viewBox="0 0 26 26"><path d="M2 5h8l2 2h12v15H2Z" fill="#f5c342"/><rect x="2" y="9" width="22" height="13" fill="#ffd65a"/><rect x="8" y="15" width="10" height="5" fill="#2b7cd3"/><rect x="10" y="17" width="6" height="4" fill="#3fa34d"/></svg>
<div class="a" style="left:440px;top:765px;width:40px;height:3px;background:#7fb8e6"></div>
<svg class="a" style="left:495px;top:735px" width="26" height="26" viewBox="0 0 26 26"><path d="M3 14Q3 3 14 3Q24 3 24 12Q24 16 19 16H9Q9 20 14 21Q18 22 22 20Q19 24 13 24Q3 24 3 14Z" fill="#1e9de0"/><path d="M3 14Q5 8 12 9Q17 10 17 13H9Q9 17 11 20Q3 19 3 14Z" fill="#3cc36a" opacity=".8"/><rect x="4" y="14" width="9" height="9" fill="#e07b1a"/></svg>
<div class="a" style="left:489px;top:765px;width:40px;height:3px;background:#7fb8e6"></div>
<svg class="a" style="left:544px;top:735px" width="26" height="26" viewBox="0 0 26 26"><path d="M3 8h20l-1 15H4Z" fill="#f7f7f7"/><path d="M9 8V5Q9 2 13 2Q17 2 17 5V8" fill="none" stroke="#3aa0f0" stroke-width="1.5"/><rect x="9" y="11" width="3.5" height="3.5" fill="#f25022"/><rect x="13.5" y="11" width="3.5" height="3.5" fill="#7fba00"/><rect x="9" y="15.5" width="3.5" height="3.5" fill="#00a4ef"/><rect x="13.5" y="15.5" width="3.5" height="3.5" fill="#ffb900"/></svg>
<svg class="a" style="left:593px;top:735px" width="26" height="26" viewBox="0 0 26 26"><path d="M5 4Q8 1 12 3L18 6Q22 9 21 13L19 18L4 14Z" fill="#40b4f5"/><path d="M4 13L12 8L19 16Q18 20 13 19Z" fill="#e56bd1"/><path d="M18 6Q22 9 21 13L19 18L13 11Z" fill="#9b5ae0"/><rect x="4" y="18" width="19" height="7" fill="#111"/><text x="5" y="24" font-size="6" fill="#fff" font-family="Liberation Sans" font-weight="bold">M365</text></svg>
<svg class="a" style="left:642px;top:735px" width="26" height="26" viewBox="0 0 26 26"><rect x="9" y="4" width="15" height="18" rx="2" fill="#1490df"/><path d="M9 12l15 8v3H9Z" fill="#28a8ea"/><rect x="2" y="7" width="12" height="12" rx="1.5" fill="#0a64ad"/><circle cx="8" cy="13" r="3.3" fill="none" stroke="#fff" stroke-width="1.8"/></svg>
<svg class="a" style="left:691px;top:735px" width="26" height="26" viewBox="0 0 26 26"><circle cx="18" cy="6" r="3" fill="#7b83eb"/><rect x="2" y="7" width="14" height="14" rx="2" fill="#5059c9"/><text x="5.5" y="18" font-size="10" fill="#fff" font-family="Liberation Sans" font-weight="bold">T</text><circle cx="18" cy="19" r="6" fill="#2aa33b"/><path d="M15 19l2 2 4-4" stroke="#fff" stroke-width="1.8" fill="none"/></svg>
<div class="a" style="left:685px;top:765px;width:40px;height:3px;background:#7fb8e6"></div>
<svg class="a" style="left:740px;top:735px" width="26" height="26" viewBox="0 0 26 26"><path d="M18 2L24 5V21L18 24L7 14L3 17L1 16V10L3 9L7 12Z M18 8L11 13L18 18Z" fill="#1f8ad2"/><path d="M18 2L24 5V21L18 24Z" fill="#2aa0f0"/></svg>
<div class="a" style="left:733px;top:765px;width:40px;height:3px;background:#7fb8e6"></div>
<svg class="a" style="left:789px;top:735px" width="26" height="26" viewBox="0 0 26 26"><circle cx="13" cy="13" r="11" fill="#db4437"/><path d="M13 13L3.5 18.5A11 11 0 0 0 18.5 22.5Z" fill="#0f9d58"/><path d="M13 13L18.5 22.5A11 11 0 0 0 24 13Z" fill="#ffcd40"/><path d="M13 13H24A11 11 0 0 0 23 8.5L13 8.5Z" fill="#ffcd40"/><circle cx="13" cy="13" r="5" fill="#fff"/><circle cx="13" cy="13" r="3.8" fill="#4285f4"/></svg>
<div class="a" style="left:783px;top:765px;width:40px;height:3px;background:#7fb8e6"></div>
<div class="a" style="left:828px;top:727px;width:48px;height:41px;background:#3a4757"></div>
<svg class="a" style="left:839px;top:735px" width="26" height="26" viewBox="0 0 26 26"><ellipse cx="13" cy="12" rx="9" ry="9" fill="#9fb7c8"/><path d="M6 10Q10 5 16 7Q20 9 18 14Q13 12 9 15Z" fill="#e6eef3"/><path d="M3 19Q13 24 23 19Q22 23 13 23Q4 23 3 19Z" fill="#f4f6f8"/></svg>
<div class="a" style="left:828px;top:765px;width:48px;height:3px;background:#8cc4ee"></div>
<svg class="a" style="left:887px;top:735px" width="26" height="26" viewBox="0 0 26 26"><rect x="2" y="2" width="22" height="22" fill="#2a5f8f"/><path d="M5 6Q12 4 15 10Q16 16 20 20M8 8Q10 14 9 18M18 4L21 8" stroke="#dce9f5" stroke-width="1.2" fill="none"/></svg>
<div class="a" style="left:881px;top:765px;width:40px;height:3px;background:#7fb8e6"></div>
<svg class="a" style="left:935px;top:735px" width="26" height="26" viewBox="0 0 26 26"><path d="M8 3L23 5L19 23L3 20Z" fill="#bfe3e6"/><path d="M8 3L23 5L21 9L6 7Z" fill="#e9f6f7"/><path d="M5 13L19 15L18 21L4 19Z" fill="#3aa6b9" opacity=".6"/></svg>
<div class="a" style="left:929px;top:765px;width:41px;height:3px;background:#7fb8e6"></div>
<svg class="a" style="left:1061px;top:735px" width="26" height="26" viewBox="0 0 26 26"><path d="M4 4Q12 2 20 5M3 9Q12 7 21 10M4 14Q12 12 20 15M3 19Q12 17 21 20M5 23Q12 21 19 23" stroke="#d9542b" stroke-width="2.5" fill="none"/></svg>
<div class="t" style="left:1094px;top:741px;font-size:15px;color:#fff">Air q...</div>
<svg class="a" style="left:1158px;top:743px" width="13" height="8"><path d="M1 7L6.5 1.5L12 7" stroke="#fff" stroke-width="1.3" fill="none"/></svg>
<svg class="a" style="left:1182px;top:739px" width="14" height="18" viewBox="0 0 14 18"><rect x="1.5" y="5" width="8" height="8" rx="1.5" fill="none" stroke="#fff" stroke-width="1.2"/><path d="M9.5 8L13 6V12L9.5 10" fill="none" stroke="#fff" stroke-width="1.2"/><path d="M2 2h8M2 16h8" stroke="#fff" stroke-width="1"/></svg>
<svg class="a" style="left:1203px;top:740px" width="18" height="16" viewBox="0 0 18 16"><path d="M1 5h3l5-4v14l-5-4H1Z" fill="none" stroke="#fff" stroke-width="1.2"/><path d="M12 5l5 5M17 5l-5 5" stroke="#fff" stroke-width="1.2"/></svg>
<svg class="a" style="left:1228px;top:740px" width="18" height="17" viewBox="0 0 18 17"><rect x="5" y="1" width="12" height="9" fill="none" stroke="#fff" stroke-width="1.2"/><rect x="1" y="3" width="5" height="5" fill="none" stroke="#fff" stroke-width="1.1"/><path d="M11 10v4M7 15h8" stroke="#fff" stroke-width="1.2"/></svg>
<div class="t" style="left:1259px;top:733px;font-size:11.7px;color:#fff">2:09 PM</div>
<div class="t" style="left:1255px;top:750px;font-size:11.7px;color:#fff">5/19/2025</div>
<svg class="a" style="left:1322px;top:737px" width="24" height="24" viewBox="0 0 24 24"><path d="M2 2h16v11H8l-4 4v-4H2Z" fill="#fff"/><path d="M5 5h10M5 8h10" stroke="#1c2b3d" stroke-width="1.2"/><circle cx="16" cy="17" r="6" fill="#2c3b4d" stroke="#aab" stroke-width="1"/><text x="13" y="21" font-size="9" fill="#fff" font-family="Liberation Sans">3</text></svg>
</body></html>
